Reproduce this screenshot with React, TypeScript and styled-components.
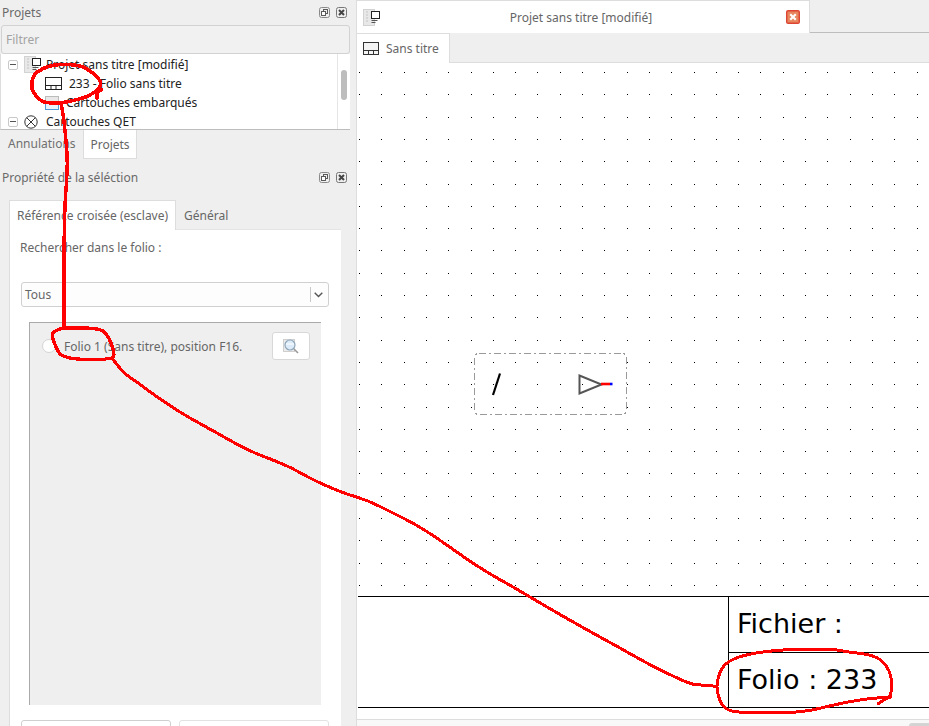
import React from "react";
import styled, { createGlobalStyle } from "styled-components";

const Global = createGlobalStyle`
  html, body { margin: 0; padding: 0; width: 929px; height: 726px; overflow: hidden; }
  body { font-family: "Noto Sans", "Open Sans", sans-serif; font-size: 12px; color: #666; background: #efefef; }
  * { box-sizing: border-box; }
`;

const Page = styled.div`
  position: relative;
  display: flex;
  width: 929px;
  height: 726px;
  overflow: hidden;
  background: #efefef;
`;

/* ---------- left dock ---------- */
const Sidebar = styled.aside`
  width: 357px;
  flex: none;
  display: flex;
  flex-direction: column;
  border-right: 1px solid #ddd;
`;
const DockTitle = styled.div<{ $top?: number; $bottom?: number }>`
  height: 25px;
  flex: none;
  margin: ${(p) => p.$top ?? 0}px 0 ${(p) => p.$bottom ?? 0}px;
  padding: 0 9px 0 2px;
  display: flex;
  align-items: center;
  justify-content: space-between;
  font-size: 12px;
  color: #6a6a6a;
`;
const DockIcons = styled.div`
  display: flex;
  gap: 6px;
  align-items: center;
`;
const FilterBox = styled.div`
  height: 29px;
  width: 349px;
  margin-left: 1px;
  flex: none;
  display: flex;
  align-items: center;
  padding-left: 4px;
  background: #f1f1f1;
  border: 1px solid #d2d2d2;
  border-radius: 3px;
  color: #a3a3a3;
`;
const Tree = styled.div`
  height: 76px;
  width: 350px;
  flex: none;
  display: flex;
  overflow: hidden;
  background: #fff;
  border-left: 1px solid #ddd;
  border-bottom: 1px solid #bdbdbd;
`;
const TreeBody = styled.div`
  flex: 1;
  padding-top: 1px;
  color: #222;
`;
const TreeRow = styled.div<{ $indent?: number }>`
  height: 19px;
  display: flex;
  align-items: center;
  padding-left: ${(p) => p.$indent ?? 7}px;
  white-space: nowrap;
`;
const Expander = styled.span`
  width: 10px;
  height: 10px;
  flex: none;
  display: flex;
  align-items: center;
  justify-content: center;
  margin-right: 6px;
  border: 1px solid #c9c9c9;
  border-radius: 2px;
  &::before { content: ""; width: 6px; height: 1px; background: #555; }
`;
const RowIcon = styled.span<{ $gap: number }>`
  display: flex;
  flex: none;
  margin-right: ${(p) => p.$gap}px;
`;
const ScrollTrack = styled.div`
  width: 13px;
  flex: none;
  padding: 16px 3px 0;
  border-left: 1px solid #e6e6e6;
  background: #fff;
`;
const ScrollThumb = styled.div`
  height: 30px;
  border-radius: 3px;
  background: #bdbdbd;
`;
const DockTabs = styled.div`
  height: 29px;
  flex: none;
  display: flex;
  padding-left: 8px;
`;
const PlainTab = styled.div`
  width: 75px;
  display: flex;
  align-items: center;
  padding-bottom: 2px;
  color: #707070;
`;
const DockTab = styled.div`
  width: 54px;
  display: flex;
  align-items: center;
  justify-content: center;
  background: #fff;
  color: #666;
  border: 1px solid #ddd;
  border-top: 0;
`;
const PropTabs = styled.div`
  height: 30px;
  flex: none;
  display: flex;
  margin-left: 9px;
  width: 332px;
  border-bottom: 1px solid #e4e4e4;
`;
const PropTab = styled.div<{ $active?: boolean }>`
  display: flex;
  align-items: center;
  padding: ${(p) => (p.$active ? "0 7px" : "2px 8px 0")};
  height: ${(p) => (p.$active ? 30 : 29)}px;
  color: #666;
  background: ${(p) => (p.$active ? "#fff" : "transparent")};
  border: ${(p) => (p.$active ? "1px solid #ddd" : "0")};
  border-bottom: 0;
`;
const PropPanel = styled.div`
  width: 332px;
  margin-left: 9px;
  flex: 1;
  display: flex;
  flex-direction: column;
  background: #fff;
  border-left: 1px solid #ddd;
  padding: 8px 11px 0;
  min-height: 0;
`;
const Label = styled.div`
  height: 18px;
  flex: none;
  display: flex;
  align-items: center;
  color: #666;
  margin-bottom: 26px;
  margin-left: -1px;
`;
const Select = styled.div`
  width: 308px;
  height: 25px;
  flex: none;
  display: flex;
  align-items: center;
  justify-content: space-between;
  padding: 0 5px 0 3px;
  background: #fdfdfd;
  border: 1px solid #d0d0d0;
  border-radius: 3px;
  color: #666;
`;
const SelectArrow = styled.span`
  display: flex;
  align-items: center;
  height: 15px;
  padding-left: 3px;
  border-left: 1px solid #c8c8c8;
`;
const ResultFrame = styled.div`
  width: 292px;
  height: 383px;
  flex: none;
  margin: 15px 0 0 8px;
  padding: 9px 11px 0 12px;
  background: #efefef;
  border-top: 1px solid #aaa;
  border-left: 1px solid #aaa;
`;
const ResultRow = styled.div`
  display: flex;
  align-items: center;
  height: 28px;
`;
const Radio = styled.span`
  width: 14px;
  height: 14px;
  flex: none;
  margin-right: 8px;
  border-radius: 50%;
  background: #fff;
  border: 1px solid #d4d4d4;
`;
const ResultText = styled.span`
  flex: 1;
  color: #666;
  white-space: nowrap;
`;
const SearchButton = styled.div`
  width: 38px;
  height: 28px;
  flex: none;
  display: flex;
  align-items: center;
  justify-content: center;
  background: #fff;
  border: 1px solid #d8d8d8;
  border-radius: 3px;
`;
const FooterButtons = styled.div`
  display: flex;
  gap: 8px;
  margin-top: 15px;
  flex: none;
`;
const FooterButton = styled.div<{ $dim?: boolean }>`
  width: 150px;
  height: 30px;
  background: #fff;
  border: 1px solid ${(p) => (p.$dim ? "#e2e2e2" : "#cfcfcf")};
  border-radius: 3px;
`;

/* ---------- right area ---------- */
const Main = styled.main`
  flex: 1;
  min-width: 0;
  display: flex;
  flex-direction: column;
`;
const WindowBar = styled.div`
  height: 33px;
  flex: none;
  display: flex;
`;
const WindowTab = styled.div`
  width: 453px;
  flex: none;
  display: flex;
  align-items: center;
  justify-content: space-between;
  padding: 0 9px 0 6px;
  background: #fff;
  border-top: 1px solid #ddd;
  border-right: 1px solid #ddd;
  color: #666;
`;
const WindowTitle = styled.span`
  flex: 1;
  text-align: center;
  padding-right: 4px;
`;
const WindowRest = styled.div`
  flex: 1;
  border-bottom: 1px solid #bdbdbd;
`;
const DocBar = styled.div`
  height: 30px;
  flex: none;
  display: flex;
  border-bottom: 1px solid #ddd;
`;
const DocTab = styled.div`
  width: 93px;
  height: 30px;
  flex: none;
  display: flex;
  align-items: center;
  gap: 7px;
  padding-left: 6px;
  background: #fff;
  color: #666;
  border-top: 1px solid #ddd;
  border-right: 1px solid #ddd;
`;
const Canvas = styled.div`
  position: relative;
  flex: 1;
  min-height: 0;
  display: flex;
  flex-direction: column;
  justify-content: flex-end;
  padding: 0 0 11px 1px;
  background: #fff;
`;
const Drawing = styled.svg`
  position: absolute;
  left: 0;
  top: 0;
  width: 572px;
  height: 656px;
`;
const TitleBlock = styled.div`
  position: relative;
  display: grid;
  grid-template-columns: 371px 1fr;
  grid-template-rows: 55px 55px;
  height: 112px;
  background: #fff;
  border-top: 1px solid #000;
  border-bottom: 1px solid #000;
`;
const BlockEmpty = styled.div`
  grid-row: 1 / 3;
  border-right: 1px solid #000;
`;
const BlockCell = styled.div<{ $line?: boolean }>`
  display: flex;
  align-items: center;
  padding: 0 0 2px 8px;
  font-family: "DejaVu Sans", sans-serif;
  font-size: 27px;
  color: #000;
  white-space: nowrap;
  border-top: ${(p) => (p.$line ? "1px solid #000" : "0")};
`;
const HScroll = styled.div`
  height: 7px;
  flex: none;
  display: flex;
  justify-content: flex-end;
  align-items: flex-end;
  background: #f8f8f8;
  border-top: 1px solid #ddd;
`;
const HThumb = styled.div`
  width: 20px;
  height: 3px;
  background: #d4d4d4;
  border-radius: 3px 0 0 0;
`;
const Annotation = styled.svg`
  position: absolute;
  left: 0;
  top: 0;
  width: 929px;
  height: 726px;
  pointer-events: none;
`;

/* ---------- icons ---------- */
const FloatIcon = () => (
  <svg width="11" height="11" viewBox="0 0 11 11" fill="none" stroke="#5a5a5a">
    <rect x=".5" y=".5" width="10" height="10" rx="2" stroke="#8a8a8a" />
    <rect x="4.5" y="2.5" width="4" height="4" />
    <rect x="2.5" y="4.5" width="4" height="4" fill="#fff" />
  </svg>
);
const CloseIcon = () => (
  <svg width="11" height="11" viewBox="0 0 11 11" fill="none">
    <rect x=".5" y=".5" width="10" height="10" rx="2" stroke="#777" />
    <path d="M3 3l5 5M8 3l-5 5" stroke="#444" strokeWidth="2" />
  </svg>
);
const FolioIcon = () => (
  <svg width="17" height="13" viewBox="0 0 17 13" fill="none" stroke="#222">
    <rect x=".5" y=".5" width="16" height="12" />
    <path d="M.5 8.5h16M6 8.5v4M11 8.5v4" />
  </svg>
);
const DocFolioIcon = () => (
  <svg width="16" height="13" viewBox="0 0 16 13" fill="none" stroke="#333">
    <rect x=".5" y=".5" width="15" height="12" fill="#f4f4f4" />
    <path d="M.5 8.5h15M5.5 8.5v4M10.5 8.5v4" />
  </svg>
);
const ProjectIcon = ({ size = 17 }: { size?: number }) => (
  <svg width={size} height={size} viewBox="0 0 17 17" fill="none">
    <rect x=".5" y=".5" width="11" height="16" fill="#e8e8e8" stroke="#d2d2d2" />
    <path d="M3 3h2M3 6h2M3 9h2M3 12h2" stroke="#c4c4c4" />
    <rect x="8.5" y="2.5" width="8" height="7" fill="#fff" stroke="#222" />
    <path d="M8.5 11.5h6M8.5 13.5h4" stroke="#555" />
  </svg>
);
const TemplatesIcon = () => (
  <svg width="16" height="14" viewBox="0 0 16 14" fill="none">
    <rect x=".5" y=".5" width="13" height="10" fill="#e8e8e8" stroke="#bbb" />
    <rect x=".5" y="6.5" width="13" height="7" fill="#eaf3fb" stroke="#4f9ad6" />
  </svg>
);
const QetIcon = () => (
  <svg width="14" height="14" viewBox="0 0 14 14" fill="none" stroke="#333">
    <circle cx="7" cy="7" r="6.2" />
    <path d="M2.6 2.6l8.8 8.8M11.4 2.6l-8.8 8.8" />
  </svg>
);
const ChevronIcon = () => (
  <svg width="9" height="6" viewBox="0 0 9 6" fill="none" stroke="#555" strokeWidth="1.4">
    <path d="M.7.8l3.8 3.8L8.3.8" />
  </svg>
);
const SearchIcon = () => (
  <svg width="16" height="17" viewBox="0 0 16 17" fill="none">
    <rect x=".5" y="1.5" width="11" height="12" fill="#ececec" stroke="#cfcfcf" />
    <circle cx="7" cy="7" r="5" fill="#dcebf9" stroke="#8ea6ba" strokeWidth="1.2" />
    <path d="M3 6h8" stroke="#fff" />
    <path d="M11 11l4 4" stroke="#999" strokeWidth="1.6" />
  </svg>
);
const WindowClose = () => (
  <svg width="14" height="14" viewBox="0 0 15 15">
    <rect x=".75" y=".75" width="13.5" height="13.5" rx="1.5" fill="#e8875f" stroke="#dd4433" strokeWidth="1.5" />
    <path d="M4.5 4.5l6 6M10.5 4.5l-6 6" stroke="#fff" strokeWidth="2.2" />
  </svg>
);

/* ---------- data ---------- */
const toPath = (pts: number[][]) => {
  let d = `M${pts[0][0]} ${pts[0][1]}`;
  for (let i = 1; i < pts.length - 1; i++) {
    const mx = (pts[i][0] + pts[i + 1][0]) / 2;
    const my = (pts[i][1] + pts[i + 1][1]) / 2;
    d += ` Q${pts[i][0]} ${pts[i][1]} ${mx} ${my}`;
  }
  const l = pts[pts.length - 1];
  return `${d} L${l[0]} ${l[1]}`;
};

const treeLoop = [[97, 98], [96, 92], [103, 89], [96, 92], [101, 85], [100, 80], [92, 72], [80, 65], [57, 64], [43, 68], [33, 75], [31, 87], [35, 95], [42, 102], [50, 103], [63, 103], [75, 100], [87, 97], [96, 91]];
const stem = [[61, 103], [63, 113], [65, 130], [68, 163], [65, 200], [64, 240], [64, 328]];
const midLoop = [[63, 328], [53, 331], [52, 337], [55, 345], [62, 359], [112, 360], [115, 353], [107, 333], [97, 328], [63, 328]];
const longLine = [[112, 358], [122, 372], [137, 382], [150, 392], [172, 407], [188, 417], [217, 433], [247, 450], [273, 460], [292, 468], [313, 480], [343, 493], [367, 500], [393, 513], [415, 524], [437, 538], [458, 553], [483, 570], [513, 587], [525, 594], [547, 607], [573, 622], [600, 637], [620, 648], [650, 665], [677, 678], [693, 685], [710, 685], [716, 687]];
const endLoop = [[878, 704], [885, 699], [891, 697], [892, 677], [885, 663], [873, 655], [848, 652], [833, 649], [793, 649], [760, 652], [737, 657], [723, 665], [717, 680], [717, 693], [723, 708], [737, 713], [800, 713], [833, 705], [863, 699], [891, 697]];

const dots: number[][] = [];
for (let r = 0; r * 22.3 + 72 < 595; r++) {
  for (let c = 0; c * 22.3 + 359 < 929; c++) {
    dots.push([Math.round(359 + c * 22.3) - 357, Math.round(72 + r * 22.3) - 63]);
  }
}

export default function App() {
  return (
    <Page>
      <Global />
      <Sidebar>
        <DockTitle>
          <span>Projets</span>
          <DockIcons><FloatIcon /><CloseIcon /></DockIcons>
        </DockTitle>
        <FilterBox>Filtrer</FilterBox>
        <Tree>
          <TreeBody>
            <TreeRow>
              <Expander />
              <RowIcon $gap={5}><ProjectIcon /></RowIcon>
              Projet sans titre [modifié]
            </TreeRow>
            <TreeRow $indent={44}>
              <RowIcon $gap={7}><FolioIcon /></RowIcon>
              233 - Folio sans titre
            </TreeRow>
            <TreeRow $indent={44}>
              <RowIcon $gap={5}><TemplatesIcon /></RowIcon>
              Cartouches embarqués
            </TreeRow>
            <TreeRow>
              <Expander />
              <RowIcon $gap={8}><QetIcon /></RowIcon>
              Cartouches QET
            </TreeRow>
          </TreeBody>
          <ScrollTrack><ScrollThumb /></ScrollTrack>
        </Tree>
        <DockTabs>
          <PlainTab>Annulations</PlainTab>
          <DockTab>Projets</DockTab>
        </DockTabs>
        <DockTitle $top={6} $bottom={10}>
          <span>Propriété de la séléction</span>
          <DockIcons><FloatIcon /><CloseIcon /></DockIcons>
        </DockTitle>
        <PropTabs>
          <PropTab $active>Référence croisée (esclave)</PropTab>
          <PropTab>Général</PropTab>
        </PropTabs>
        <PropPanel>
          <Label>Rechercher dans le folio :</Label>
          <Select>
            <span>Tous</span>
            <SelectArrow><ChevronIcon /></SelectArrow>
          </Select>
          <ResultFrame>
            <ResultRow>
              <Radio />
              <ResultText>Folio 1 (Sans titre), position F16.</ResultText>
              <SearchButton><SearchIcon /></SearchButton>
            </ResultRow>
          </ResultFrame>
          <FooterButtons>
            <FooterButton />
            <FooterButton $dim />
          </FooterButtons>
        </PropPanel>
      </Sidebar>
      <Main>
        <WindowBar>
          <WindowTab>
            <ProjectIcon />
            <WindowTitle>Projet sans titre [modifié]</WindowTitle>
            <WindowClose />
          </WindowTab>
          <WindowRest />
        </WindowBar>
        <DocBar>
          <DocTab><DocFolioIcon />Sans titre</DocTab>
        </DocBar>
        <Canvas>
          <Drawing viewBox="0 0 572 656" shapeRendering="crispEdges">
            {dots.map(([x, y]) => (
              <rect key={`${x}-${y}`} x={x} y={y} width="1" height="1" fill="#000" />
            ))}
            <rect x="117.5" y="290.5" width="152" height="61" rx="4" fill="none" stroke="#9a9a9a" strokeDasharray="7 3 2 3" />
            <g shapeRendering="auto">
              <path d="M143 310.5L136 332" stroke="#000" strokeWidth="2.2" fill="none" />
              <path d="M222.5 312.5v18l22-9z" stroke="#555" strokeWidth="2" fill="none" />
              <path d="M244 321h9" stroke="#f00" strokeWidth="2.6" />
              <path d="M253 321h2.5" stroke="#00f" strokeWidth="2.6" />
            </g>
          </Drawing>
          <TitleBlock>
            <BlockEmpty />
            <BlockCell>Fichier :</BlockCell>
            <BlockCell $line>Folio : 233</BlockCell>
          </TitleBlock>
        </Canvas>
        <HScroll><HThumb /></HScroll>
      </Main>
      <Annotation viewBox="0 0 929 726" fill="none" stroke="#f00" strokeLinejoin="round" strokeLinecap="round" shapeRendering="crispEdges">
        <path d={toPath(treeLoop)} strokeWidth="3.6" />
        <path d={toPath(stem)} strokeWidth="3.4" />
        <path d={toPath(midLoop)} strokeWidth="3.4" />
        <path d={toPath(longLine)} strokeWidth="3" />
        <path d={toPath(endLoop)} strokeWidth="3" />
      </Annotation>
    </Page>
  );
}
